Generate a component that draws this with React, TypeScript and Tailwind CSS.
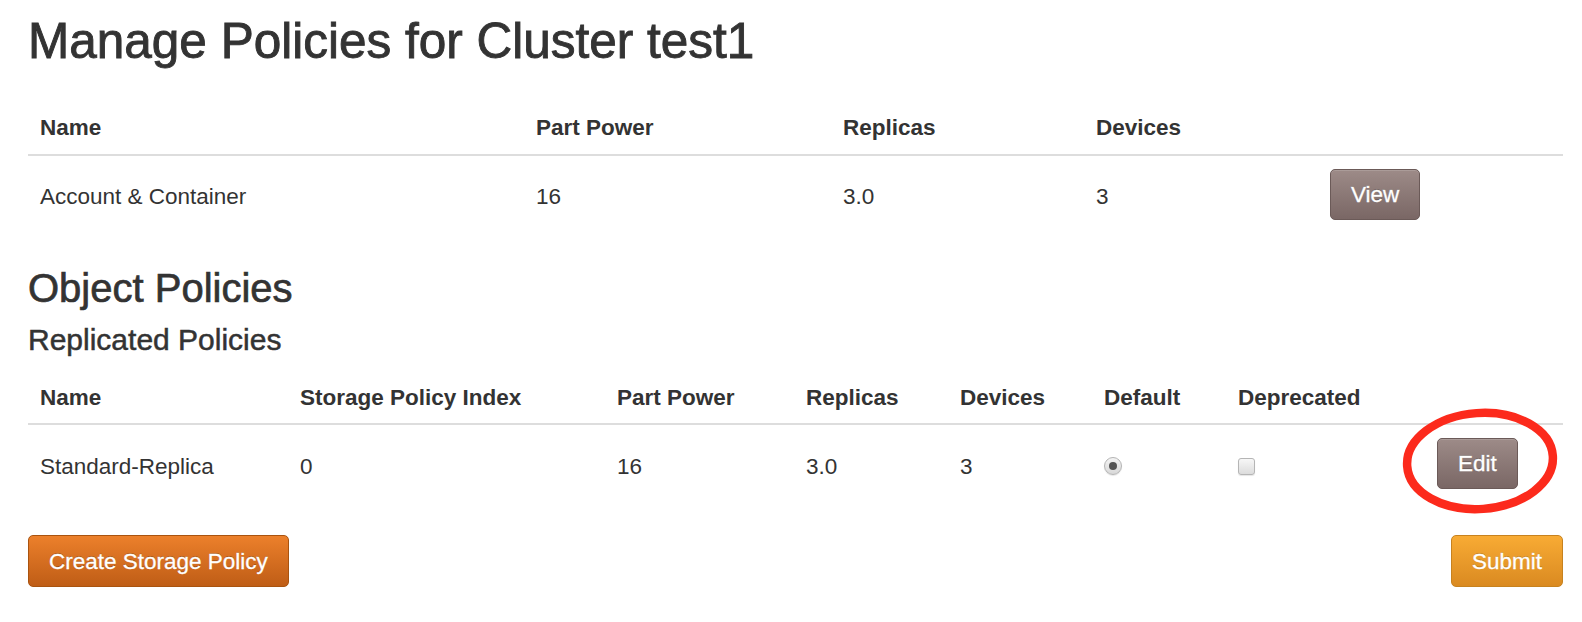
import React from "react";

const policyRows = [
  { name: "Account & Container", partPower: "16", replicas: "3.0", devices: "3" },
];

const replicated = [
  { name: "Standard-Replica", index: "0", partPower: "16", replicas: "3.0", devices: "3", isDefault: true, deprecated: false },
];

const th = "text-left font-bold px-[12px] pt-[12px] pb-[10px] border-b-2 border-[#dddddd] align-bottom";
const td = "px-[12px] pt-[15px] pb-[9px] align-middle";
const tdBtn = "px-[12px] pt-[13px] pb-[12px] align-middle";

function BrownButton({ label }: { label: string }) {
  return (
    <button
      type="button"
      className="h-[51px] rounded-[5px] border border-[#6b5a58] bg-gradient-to-b from-[#9d8b88] to-[#7a6765] px-[20px] text-white [-webkit-text-stroke:0.3px_#ffffff] [text-shadow:0_-1px_0_rgba(0,0,0,0.25)] shadow-[inset_0_1px_0_rgba(255,255,255,0.15)]"
    >
      {label}
    </button>
  );
}

function Radio({ checked }: { checked: boolean }) {
  return (
    <span className="flex h-[18px] w-[18px] items-center justify-center rounded-full border border-[#b5b5b5] bg-gradient-to-b from-[#f4f4f4] to-[#d8d8d8] shadow-[0_1px_1px_rgba(0,0,0,0.1)]">
      {checked && <span className="h-[8px] w-[8px] rounded-full bg-[#555555]" />}
    </span>
  );
}

function Checkbox() {
  return (
    <span className="block h-[17px] w-[17px] rounded-[3px] border border-[#b5b5b5] bg-gradient-to-b from-[#f7f7f7] to-[#dcdcdc] shadow-[0_1px_1px_rgba(0,0,0,0.1)]" />
  );
}

export default function App() {
  return (
    <div className="min-h-[622px] bg-white pl-[28px] pr-[19px] pt-[14px] text-[22.5px] leading-[1.4] text-[#333333] [font-family:'Liberation_Sans',Arial,sans-serif]">
      <h1 className="text-[49.5px] leading-[1.1] font-normal [-webkit-text-stroke:0.9px_#333333]">
        Manage Policies for Cluster test1
      </h1>

      <table className="mt-[32px] w-full table-fixed border-collapse">
        <colgroup>
          <col className="w-[496px]" />
          <col className="w-[307px]" />
          <col className="w-[253px]" />
          <col className="w-[234px]" />
          <col />
        </colgroup>
        <thead>
          <tr>
            <th className={th}>Name</th>
            <th className={th}>Part Power</th>
            <th className={th}>Replicas</th>
            <th className={th}>Devices</th>
            <th className={th}></th>
          </tr>
        </thead>
        <tbody>
          {policyRows.map((row) => (
            <tr key={row.name}>
              <td className={td}>{row.name}</td>
              <td className={td}>{row.partPower}</td>
              <td className={td}>{row.replicas}</td>
              <td className={td}>{row.devices}</td>
              <td className={tdBtn}>
                <BrownButton label="View" />
              </td>
            </tr>
          ))}
        </tbody>
      </table>

      <h2 className="mt-[34px] text-[40px] leading-[1.1] font-normal [-webkit-text-stroke:0.7px_#333333]">
        Object Policies
      </h2>
      <h3 className="mt-[13px] text-[30px] leading-[1.1] font-normal [-webkit-text-stroke:0.5px_#333333]">
        Replicated Policies
      </h3>

      <table className="mt-[14px] w-full table-fixed border-collapse">
        <colgroup>
          <col className="w-[260px]" />
          <col className="w-[317px]" />
          <col className="w-[189px]" />
          <col className="w-[154px]" />
          <col className="w-[144px]" />
          <col className="w-[134px]" />
          <col className="w-[199px]" />
          <col />
        </colgroup>
        <thead>
          <tr>
            <th className={th}>Name</th>
            <th className={th}>Storage Policy Index</th>
            <th className={th}>Part Power</th>
            <th className={th}>Replicas</th>
            <th className={th}>Devices</th>
            <th className={th}>Default</th>
            <th className={th}>Deprecated</th>
            <th className={th}></th>
          </tr>
        </thead>
        <tbody>
          {replicated.map((row) => (
            <tr key={row.name}>
              <td className={td}>{row.name}</td>
              <td className={td}>{row.index}</td>
              <td className={td}>{row.partPower}</td>
              <td className={td}>{row.replicas}</td>
              <td className={td}>{row.devices}</td>
              <td className={td}>
                <Radio checked={row.isDefault} />
              </td>
              <td className={td}>
                <Checkbox />
              </td>
              <td className={`${tdBtn} relative`}>
                <BrownButton label="Edit" />
                {/* red annotation circle drawn over the button */}
                <svg
                  className="pointer-events-none absolute left-[-28px] top-[-21px]"
                  width="166"
                  height="114"
                  viewBox="0 0 166 114"
                >
                  <ellipse
                    cx="83"
                    cy="57"
                    rx="73"
                    ry="48"
                    fill="none"
                    stroke="#fc2a1c"
                    strokeWidth="8.5"
                    transform="rotate(-4 83 57)"
                  />
                </svg>
              </td>
            </tr>
          ))}
        </tbody>
      </table>

      <div className="mt-[34px] flex items-center justify-between">
        <button
          type="button"
          className="h-[52px] rounded-[5px] border border-[#a9530f] bg-gradient-to-b from-[#ec802b] to-[#bf5d16] px-[20px] text-white [-webkit-text-stroke:0.3px_#ffffff] [text-shadow:0_-1px_0_rgba(0,0,0,0.25)]"
        >
          Create Storage Policy
        </button>
        <button
          type="button"
          className="h-[52px] rounded-[5px] border border-[#c7821f] bg-gradient-to-b from-[#f8ab34] to-[#da8a21] px-[20px] text-white [-webkit-text-stroke:0.3px_#ffffff] [text-shadow:0_-1px_0_rgba(0,0,0,0.2)]"
        >
          Submit
        </button>
      </div>
    </div>
  );
}
